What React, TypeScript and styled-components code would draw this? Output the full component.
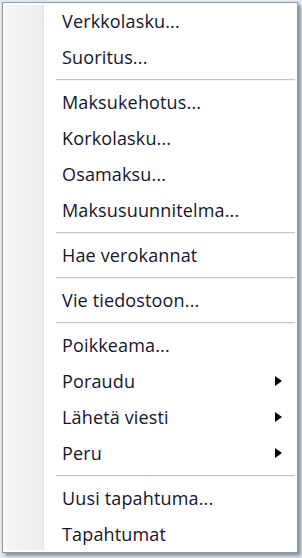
import styled, { createGlobalStyle } from "styled-components";

const GlobalStyle = createGlobalStyle`
  html, body {
    margin: 0;
    padding: 0;
  }
  body {
    background: #dfe7f1;
    font-family: "Open Sans", "Noto Sans", sans-serif;
  }
`;

// Taustaikkuna, jonka päällä valikko on
const Desktop = styled.div`
  width: 302px;
  height: 558px;
  padding: 2px 0 0 2px;
  box-sizing: border-box;
  background: #dfe7f1;
  overflow: hidden;
`;

const MenuBox = styled.div`
  width: 296px;
  box-sizing: border-box;
  display: flex;
  border: 1px solid #979797;
  background: #ffffff;
  box-shadow: 3px 3px 3px rgba(0, 0, 0, 0.35);
  padding: 0 2px;
`;

const Gutter = styled.div`
  width: 38px;
  flex: none;
  margin: 2px 0;
  background: linear-gradient(to right, #f6f6f6, #ededed);
  border-right: 1px solid #e2e2e2;
`;

const List = styled.ul`
  flex: 1;
  list-style: none;
  margin: 0;
  padding: 0;
`;

const Item = styled.li`
  height: 36px;
  display: flex;
  align-items: center;
  justify-content: space-between;
  padding: 0 12px 0 18px;
  font-size: 18px;
  letter-spacing: 0.15px;
  color: #15152b;
  cursor: default;
`;

const Arrow = styled.span`
  width: 0;
  height: 0;
  margin-right: 1px;
  border-top: 5px solid transparent;
  border-bottom: 5px solid transparent;
  border-left: 7px solid #000000;
`;

const Separator = styled.li`
  height: 9px;
  display: flex;
  align-items: center;
  margin-left: 12px;

  &::before {
    content: "";
    flex: 1;
    height: 1px;
    background: #c6c6c6;
    box-shadow: 0 1px 0 #f2f2f2;
  }
`;

type Entry = { label: string; sub?: boolean } | "sep";

const entries: Entry[] = [
  { label: "Verkkolasku..." },
  { label: "Suoritus..." },
  "sep",
  { label: "Maksukehotus..." },
  { label: "Korkolasku..." },
  { label: "Osamaksu..." },
  { label: "Maksusuunnitelma..." },
  "sep",
  { label: "Hae verokannat" },
  "sep",
  { label: "Vie tiedostoon..." },
  "sep",
  { label: "Poikkeama..." },
  { label: "Poraudu", sub: true },
  { label: "Lähetä viesti", sub: true },
  { label: "Peru", sub: true },
  "sep",
  { label: "Uusi tapahtuma..." },
  { label: "Tapahtumat" },
];

const App = () => {
  return (
    <Desktop>
      <GlobalStyle />
      <MenuBox>
        <Gutter />
        <List>
          {entries.map((e, i) =>
            e === "sep" ? (
              <Separator key={i} />
            ) : (
              <Item key={i}>
                <span>{e.label}</span>
                {e.sub && <Arrow />}
              </Item>
            )
          )}
        </List>
      </MenuBox>
    </Desktop>
  );
};

export default App;
